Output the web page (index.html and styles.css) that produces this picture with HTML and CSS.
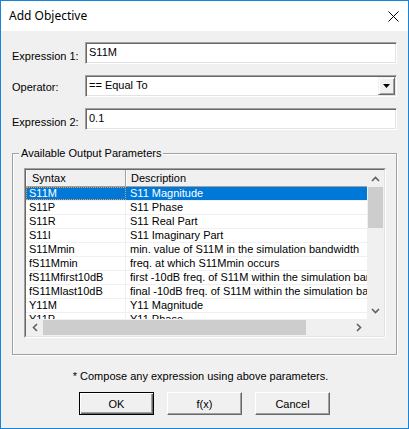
FILE: index.html
```html
<!DOCTYPE html>
<html>
<head>
<meta charset="utf-8">
<title>Add Objective</title>
<link rel="stylesheet" href="styles.css">
</head>
<body>
<div class="window">
  <div class="titlebar">
    <span class="title">Add Objective</span>
    <span class="close"><svg width="11" height="11" viewBox="0 0 11 11"><path d="M0.5 0.5 L10.5 10.5 M10.5 0.5 L0.5 10.5" stroke="#000" stroke-width="1" fill="none"/></svg></span>
  </div>
  <div class="body">
    <div class="row">
      <label class="lbl">Expression 1:</label>
      <div class="edit">S11M</div>
    </div>
    <div class="row row-combo">
      <label class="lbl">Operator:</label>
      <div class="combo">
        <span class="combo-text">== Equal To</span>
        <span class="dropbtn"><svg width="7" height="4" viewBox="0 0 7 4"><path d="M0 0 H7 L3.5 4 Z" fill="#000"/></svg></span>
      </div>
    </div>
    <div class="row">
      <label class="lbl">Expression 2:</label>
      <div class="edit">0.1</div>
    </div>

    <fieldset class="group">
      <legend>Available Output Parameters</legend>
      <div class="list">
        <div class="list-inner">
          <div class="lv">
            <div class="lv-head">
              <div class="hc hc1">Syntax</div>
              <div class="hc hc2">Description</div>
            </div>
            <div class="lv-row sel"><div class="c1">S11M</div><div class="c2">S11 Magnitude</div></div>
            <div class="lv-row"><div class="c1">S11P</div><div class="c2">S11 Phase</div></div>
            <div class="lv-row"><div class="c1">S11R</div><div class="c2">S11 Real Part</div></div>
            <div class="lv-row"><div class="c1">S11I</div><div class="c2">S11 Imaginary Part</div></div>
            <div class="lv-row"><div class="c1">S11Mmin</div><div class="c2">min. value of S11M in the simulation bandwidth</div></div>
            <div class="lv-row"><div class="c1">fS11Mmin</div><div class="c2">freq. at which S11Mmin occurs</div></div>
            <div class="lv-row"><div class="c1">fS11Mfirst10dB</div><div class="c2">first -10dB freq. of S11M within the simulation bandwidth</div></div>
            <div class="lv-row"><div class="c1">fS11Mlast10dB</div><div class="c2">final -10dB freq. of S11M within the simulation bandwidth</div></div>
            <div class="lv-row"><div class="c1">Y11M</div><div class="c2">Y11 Magnitude</div></div>
            <div class="lv-row"><div class="c1">Y11P</div><div class="c2">Y11 Phase</div></div>
            <div class="lv-row"><div class="c1">Y11R</div><div class="c2">Y11 Real Part</div></div>
          </div>
          <div class="vscroll">
            <div class="sb-btn"><svg width="9" height="6" viewBox="0 0 9 6"><polyline points="1,5 4.5,1.5 8,5" fill="none" stroke="#606060" stroke-width="1.6"/></svg></div>
            <div class="vtrack"><div class="vthumb"></div></div>
            <div class="sb-btn"><svg width="9" height="6" viewBox="0 0 9 6"><polyline points="1,1 4.5,4.5 8,1" fill="none" stroke="#606060" stroke-width="1.6"/></svg></div>
          </div>
          <div class="hscroll">
            <div class="sb-btn hbtn"><svg width="6" height="9" viewBox="0 0 6 9"><polyline points="5,1 1.5,4.5 5,8" fill="none" stroke="#606060" stroke-width="1.6"/></svg></div>
            <div class="htrack"><div class="hthumb"></div></div>
            <div class="sb-btn hbtn"><svg width="6" height="9" viewBox="0 0 6 9"><polyline points="1,1 4.5,4.5 1,8" fill="none" stroke="#606060" stroke-width="1.6"/></svg></div>
          </div>
          <div class="corner"></div>
        </div>
      </div>
    </fieldset>

    <p class="note">* Compose any expression using above parameters.</p>

    <div class="buttons">
      <button class="btn btn-default">OK</button>
      <button class="btn">f(x)</button>
      <button class="btn">Cancel</button>
    </div>
  </div>
</div>
</body>
</html>
```

FILE: styles.css
```css
html, body {
  margin: 0;
  padding: 0;
  background: #ffffff;
}

body {
  font-family: "Liberation Sans", Arial, sans-serif;
  font-size: 11px;
  line-height: 13px;
  color: #000000;
}

.window {
  width: 409px;
  height: 429px;
  box-sizing: border-box;
  border: 1px solid #1883d7;
  background: #f0f0f0;
  display: flex;
  flex-direction: column;
}

.titlebar {
  flex: none;
  height: 30px;
  background: #ffffff;
  display: flex;
  align-items: center;
  justify-content: space-between;
  padding: 0 9px 0 8px;
}

.title {
  font-family: "Noto Sans", "Open Sans", sans-serif;
  font-size: 12px;
  line-height: 16px;
  color: #000000;
}

.close svg {
  display: block;
}

.body {
  display: flex;
  flex-direction: column;
  padding: 0 11px;
}

.row {
  display: flex;
  align-items: flex-start;
  margin-top: 11px;
}

.lbl {
  flex: none;
  width: 73px;
  margin-top: 8px;
}

.row-combo .lbl {
  margin-top: 6px;
}

.edit {
  width: 312px;
  height: 22px;
  box-sizing: border-box;
  background: #ffffff;
  border: 1px solid;
  border-color: #a0a0a0 #ffffff #ffffff #a0a0a0;
  box-shadow: inset 1px 1px 0 #696969, inset -1px -1px 0 #e3e3e3;
  padding: 3px 4px 0 3px;
  white-space: nowrap;
}

.combo {
  width: 312px;
  height: 22px;
  box-sizing: border-box;
  background: #ffffff;
  border: 1px solid;
  border-color: #a0a0a0 #ffffff #ffffff #a0a0a0;
  box-shadow: inset 1px 1px 0 #696969, inset -1px -1px 0 #e3e3e3;
  display: flex;
  align-items: stretch;
}

.combo-text {
  flex: 1;
  padding: 3px 0 0 3px;
}

.dropbtn {
  flex: none;
  width: 17px;
  margin: 1px 1px 1px 0;
  box-sizing: border-box;
  background: #f0f0f0;
  border: 1px solid;
  border-color: #f0f0f0 #696969 #696969 #f0f0f0;
  box-shadow: inset 1px 1px 0 #ffffff, inset -1px -1px 0 #a0a0a0;
  display: flex;
  align-items: center;
  justify-content: center;
}

.dropbtn svg {
  display: block;
}

/* group box */
.group {
  margin: 17px 0 0 0;
  width: 385px;
  min-width: 0;
  box-sizing: border-box;
  border: 1px solid #a0a0a0;
  box-shadow: 1px 1px 0 #ffffff, inset 1px 1px 0 #ffffff;
  padding: 8px 10px 16px 11px;
}

.group legend {
  margin-left: -5px;
  padding: 0 2px;
  background: #f0f0f0;
  line-height: 13px;
}

.list {
  width: 362px;
  height: 170px;
  box-sizing: border-box;
  border: 1px solid;
  border-color: #a0a0a0 #ffffff #ffffff #a0a0a0;
}

.list-inner {
  height: 100%;
  box-sizing: border-box;
  border: 1px solid;
  border-color: #696969 #e3e3e3 #e3e3e3 #696969;
  background: #ffffff;
  display: grid;
  grid-template-columns: 1fr 17px;
  grid-template-rows: 1fr 17px;
}

.lv {
  min-width: 0;
  min-height: 0;
  overflow: hidden;
  display: flex;
  flex-direction: column;
  background: #ffffff;
}

.lv-head {
  flex: none;
  display: flex;
  height: 17px;
  box-sizing: border-box;
  background: #f0f0f0;
  border-bottom: 1px solid #a0a0a0;
}

.hc {
  flex: none;
  box-sizing: border-box;
  line-height: 15px;
  padding-top: 1px;
  white-space: nowrap;
}

.hc1 {
  width: 100px;
  padding-left: 5px;
  border-left: 1px solid #ffffff;
  border-right: 1px solid #a0a0a0;
}

.hc2 {
  width: 320px;
  padding-left: 4px;
  border-left: 1px solid #ffffff;
}

.lv-row {
  flex: none;
  display: flex;
  height: 14px;
  box-sizing: border-box;
  border-bottom: 1px solid #f0f0f0;
  white-space: nowrap;
}

.c1 {
  flex: none;
  width: 100px;
  box-sizing: border-box;
  padding-left: 3px;
  border-right: 1px solid #f0f0f0;
}

.c2 {
  flex: none;
  padding-left: 4px;
}

.lv-row.sel {
  background: #0078d7;
  color: #ffffff;
}

.lv-row.sel .c1 {
  border-right-color: #0078d7;
  outline: 1px dotted #f4a040;
  outline-offset: -1px;
}

/* scrollbars */
.vscroll {
  background: #f0f0f0;
  display: flex;
  flex-direction: column;
}

.sb-btn {
  flex: none;
  height: 17px;
  display: flex;
  align-items: center;
  justify-content: center;
}

.sb-btn svg {
  display: block;
}

.vtrack {
  flex: 1;
  padding: 0 1px;
}

.vthumb {
  height: 41px;
  background: #cdcdcd;
}

.hscroll {
  background: #f0f0f0;
  display: flex;
}

.hbtn {
  width: 17px;
  height: auto;
}

.htrack {
  flex: 1;
  padding: 1px 0;
}

.hthumb {
  width: 263px;
  height: 100%;
  background: #cdcdcd;
}

.corner {
  background: #f0f0f0;
}

.note {
  margin: 15px 0 0 0;
  padding-right: 8px;
  text-align: center;
}

.buttons {
  display: flex;
  justify-content: center;
  gap: 13px;
  margin-top: 9px;
}

.btn {
  width: 75px;
  height: 23px;
  box-sizing: border-box;
  margin: 0;
  padding: 0;
  font-family: "Liberation Sans", Arial, sans-serif;
  font-size: 11px;
  color: #000000;
  background: #f0f0f0;
  border: 1px solid;
  border-color: #ffffff #696969 #696969 #ffffff;
  box-shadow: inset -1px -1px 0 #a0a0a0, inset 1px 1px 0 #f0f0f0;
}

.btn-default {
  border-color: #000000;
  box-shadow: inset 1px 1px 0 #ffffff, inset -1px -1px 0 #696969, inset -2px -2px 0 #a0a0a0;
}
```
